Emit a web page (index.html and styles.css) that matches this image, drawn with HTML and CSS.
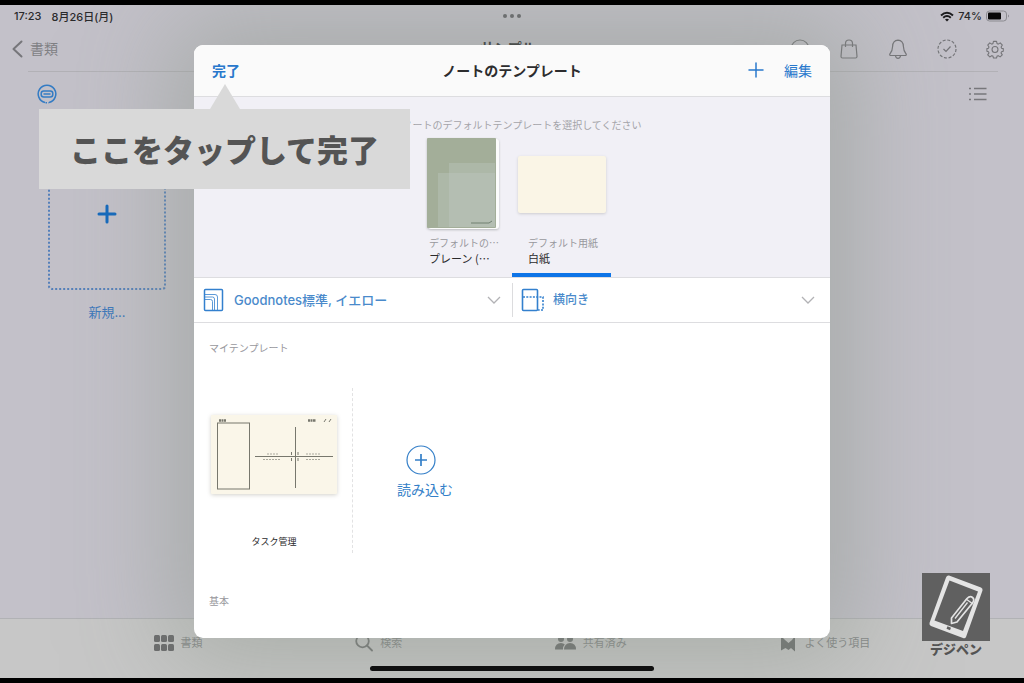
FILE: index.html
```html
<!DOCTYPE html>
<html lang="ja">
<head>
<meta charset="utf-8">
<meta name="viewport" content="width=device-width, initial-scale=1">
<title>ノートのテンプレート</title>
<link rel="stylesheet" href="styles.css">
</head>
<body>
<div class="screen">
  <div class="status">
    <div class="status-left"><span>17:23</span><span>8月26日(月)</span></div>
    <div class="dots"><i></i><i></i><i></i></div>
    <div class="status-right">
      <svg width="14" height="11" viewBox="0 0 14 11" fill="none" stroke="#1c1c1e" stroke-width="2"><path d="M1 4.4Q7-1 13 4.4M3.2 6.7Q7 3.4 10.800 6.700"/><path d="M7 10.500L5 8.400Q7 6.900 9 8.400Z" fill="#1c1c1e" stroke="none"/></svg>
      <span>74%</span>
      <svg width="24" height="12" viewBox="0 0 24 12"><rect x=".5" y="1" width="20" height="10" rx="3" fill="none" stroke="#8b8b90"/><rect x="2" y="2.500" width="13" height="7" rx="1" fill="#080808"/><path d="M22 4.500Q24 6 22 7.500Z" fill="#8b8b90"/></svg>
    </div>
  </div>

  <header class="nav">
    <button class="back" type="button">
      <svg width="11" height="18" viewBox="0 0 11 18" fill="none" stroke="#76767a" stroke-width="2" stroke-linecap="round" stroke-linejoin="round"><path d="M9.500 1.500L1.500 9L9.500 16.500"/></svg>
      <span>書類</span>
    </button>
    <h1>サンプル</h1>
    <div class="nav-icons">
      <button type="button" aria-label="検索"><svg width="20" height="20" viewBox="0 0 20 20"><circle cx="10" cy="10" r="9"/></svg></button>
      <button type="button" aria-label="ストア"><svg width="20" height="20" viewBox="0 0 20 20"><path d="M3 6H17L18 17.500Q18 19 16.500 19H3.500Q2 19 2 17.500ZM6.500 8V4.500Q6.500 1 10 1Q13.500 1 13.500 4.500V8"/></svg></button>
      <button type="button" aria-label="通知"><svg width="20" height="20" viewBox="0 0 20 20"><path d="M10 1.200Q4.800 1.600 4.600 7.500C4.500 12 3.500 13 1.800 15Q1.300 16.300 3 16.500H17Q18.700 16.300 18.200 15C16.500 13 15.500 12 15.400 7.500Q15.200 1.600 10 1.200ZM7.500 16.700Q7.800 19.300 10 19.300Q12.200 19.300 12.500 16.700"/></svg></button>
      <button type="button" aria-label="タスク"><svg width="20" height="20" viewBox="0 0 20 20"><circle cx="10" cy="10" r="9" stroke-dasharray="3 1.710"/><path d="M6.500 10L9 12.500L13.500 7.500"/></svg></button>
      <button type="button" aria-label="設定"><svg width="18" height="20" viewBox="0 0 20 20"><path d="M8.300 1.500h3.400l.6 2.500 1.300.6 2.200-1.400 2.400 2.400-1.400 2.200.5 1.300 1.900.5v2.800l-1.900.6-.6 1.300 1.400 2.200-2.400 2.300-2.100-1.400-1.300.5-.6 2.100H8.300l-.6-2.100-1.300-.5-2.200 1.400-2.300-2.300 1.400-2.200-.6-1.300-1.700-.6V9.600l1.700-.5.6-1.300L1.900 5.600l2.300-2.400 2.200 1.400L7.700 4Z" stroke-linejoin="round"/><circle cx="10" cy="10.500" r="3.300"/></svg></button>
    </div>
  </header>

  <main class="library">
    <div class="tools">
      <svg width="20" height="20" viewBox="0 0 20 20" fill="none" stroke="#347cc4" stroke-width="1.500"><path d="M8 18.500A8.800 8.800 0 1 1 12 18.500"/><path d="M8.500 18.700H11.500" stroke-dasharray="1.500 1"/><rect x="4.200" y="7" width="11.600" height="6" rx="2.500"/><path d="M6.500 10H13.500"/></svg>
      <button type="button" aria-label="リスト表示"><svg width="18" height="14" viewBox="0 0 18 14" fill="none" stroke="#77777b" stroke-width="1.300"><path d="M0 1.500H2M5 1.500H17.500M0 7H2M5 7H17.500M0 12.500H2M5 12.500H17.500"/></svg></button>
    </div>
    <button class="new" type="button">
      <span class="new-box"><svg width="20" height="20" viewBox="0 0 20 20" stroke="#1268bd" stroke-width="3" stroke-linecap="round"><path d="M10 2V18M2 10H18"/></svg></span>
      <span class="new-label">新規...</span>
    </button>
  </main>

  <nav class="tabs">
    <button type="button"><svg width="20" height="18" viewBox="0 0 20 18" fill="#68686a"><rect y="1" width="6" height="7" rx="1.500"/><rect x="7" y="1" width="6" height="7" rx="1.500"/><rect x="14" y="1" width="6" height="7" rx="1.500"/><rect y="10" width="6" height="7" rx="1.500"/><rect x="7" y="10" width="6" height="7" rx="1.500"/><rect x="14" y="10" width="6" height="7" rx="1.500"/></svg><span>書類</span></button>
    <button type="button"><svg width="18" height="18" viewBox="0 0 18 18" fill="none" stroke="#737575" stroke-width="1.800" stroke-linecap="round"><circle cx="7.500" cy="7" r="6.300"/><path d="M12 11.500L17 16.500"/></svg><span>検索</span></button>
    <button type="button"><svg width="21" height="18" viewBox="0 0 21 18" fill="#6d6f6f"><circle cx="6" cy="5" r="3"/><circle cx="15" cy="5" r="3"/><path d="M0 15.500Q0 9 6 9Q8.500 9 9.800 10.500Q8 12 8 15.500ZM9 15.500Q9.500 9 15 9Q21 9 21 15.500Z"/></svg><span>共有済み</span></button>
    <button type="button"><svg width="18" height="18" viewBox="0 0 18 18" fill="#6d6f6f"><path d="M2 2L6 6L9.500 9L13 6L16 2V17.500L12 14L9.500 16L6.500 14L2 16.500Z"/></svg><span>よく使う項目</span></button>
  </nav>
  <div class="home"></div>

  <section class="modal" role="dialog" aria-labelledby="modal-title">
    <div class="modal-head">
      <button class="done" type="button">完了</button>
      <h2 id="modal-title">ノートのテンプレート</h2>
      <div class="modal-actions">
        <button type="button" aria-label="追加"><svg width="16" height="16" viewBox="0 0 16 16" stroke="#2878cc" stroke-width="1.500" stroke-linecap="round"><path d="M8 1V15M1 8H15"/></svg></button>
        <button type="button">編集</button>
      </div>
    </div>
    <div class="defaults">
      <p class="hint">新規ノートのデフォルトテンプレートを選択してください</p>
      <div class="picks">
        <button class="pick" type="button">
          <span class="preview"><svg class="cover" width="72" height="92" viewBox="0 0 72 92"><rect x="1" y="1" width="71" height="90" rx="3" fill="#fcfcfc"/><rect width="69" height="90" rx="1" fill="#a3ae99"/><path d="M22 25H68V89H11V35H22Z" fill="#adb8a8"/><path d="M22 35H68V89H22Z" fill="#b4beb2"/><path d="M44 85H62L65 83" fill="none" stroke="#718071"/></svg></span>
          <small>デフォルトの…</small><span>プレーン (…</span>
        </button>
        <button class="pick active" type="button">
          <span class="preview"><span class="paper"></span></span>
          <small>デフォルト用紙</small><span>白紙</span>
        </button>
      </div>
    </div>
    <div class="filters">
      <label class="filter">
        <svg width="24" height="24" viewBox="0 0 24 24" fill="none" stroke="#3380ce" stroke-width="1.500"><rect x="2.500" y="1.500" width="18" height="21" rx="1"/><path d="M3 6.500H13Q15.500 6.500 15.500 9V22M3 11.500H8.500Q10.500 11.500 10.500 13.500V22M12.500 22V11Q12.500 9 10.500 9H3" stroke-width=".8"/></svg>
        <select aria-label="テンプレートの種類"><option>Goodnotes標準, イエロー</option></select>
        <svg width="14" height="8" viewBox="0 0 14 8" fill="none" stroke="#b2b2b5" stroke-width="1.300"><path d="M1 1L7 7L13 1"/></svg>
      </label>
      <label class="filter second">
        <svg width="24" height="24" viewBox="0 0 24 24" fill="none" stroke="#3380ce" stroke-width="1.600"><rect x="1.500" y="1.500" width="15" height="21" rx="1"/><path d="M2 9H22V22H17" stroke-dasharray="2 1.300"/></svg>
        <select aria-label="用紙の向き"><option>横向き</option></select>
        <svg width="14" height="8" viewBox="0 0 14 8" fill="none" stroke="#b2b2b5" stroke-width="1.300"><path d="M1 1L7 7L13 1"/></svg>
      </label>
    </div>
    <div class="templates">
      <h3>マイテンプレート</h3>
      <div class="shelf">
        <button class="template" type="button">
          <svg class="sheet" width="126" height="79" viewBox="0 0 126 79" fill="none" stroke="#77776d"><rect width="126" height="79" rx="1" fill="#faf6e9" stroke="none"/><rect x="6.500" y="8" width="32" height="66"/><path d="M44 41.500H122M84.500 12V73"/><path d="M8 5.500H15M97 5.500H105" stroke-width="2.500" stroke-dasharray="2 .5"/><path d="M113 7L115 4M118 7L120 4M80.500 37V40M80.500 43V46M87 37V40M87 43V46"/><path d="M56 39H67M52 44.500H69M95 39H109M95 44.500H109" stroke="#aaa99e" stroke-dasharray="2 1"/></svg>
          <span>タスク管理</span>
        </button>
        <button class="import" type="button">
          <svg width="30" height="30" viewBox="0 0 30 30" fill="none" stroke="#347fc8" stroke-width="1.200"><circle cx="15" cy="15" r="14"/><path d="M15 9V21M9 15H21" stroke-width="1.700"/></svg>
          <span>読み込む</span>
        </button>
      </div>
      <h3>基本</h3>
    </div>
  </section>

  <div class="callout">ここをタップして完了</div>
  <div class="brand">
    <svg width="68" height="68" viewBox="0 0 68 68"><rect width="68" height="68" fill="#606060"/><path d="M27 2.500L59 14.500Q61 15.500 60.500 17.500L44 64Q43 66 41 65L9 53Q7 52 7.500 50L24 4.500Q25 2 27 2.500Z" fill="#e4e4e4"/><path d="M27.500 7.500L56 18.500L41 58L12.500 47.500Z" fill="#606060"/><path d="M25 54.500L28.500 56" stroke="#606060" stroke-width="2.500"/><path d="M29.500 45L45 25.500Q48 22.500 50.500 24.500Q53 26.500 50.500 30L35 49L29.500 50.500Z" fill="#606060" stroke="#e4e4e4" stroke-width="1.700" stroke-linejoin="round"/><path d="M33 45.500L45.500 29.500" stroke="#e4e4e4" stroke-width="1.300"/><path d="M44 26L51 31" stroke="#e4e4e4" stroke-width="1.500"/></svg>
    <span>デジペン</span>
  </div>
</div>
</body>
</html>
```
FILE: styles.css
```css
* { box-sizing: border-box; }

body {
  margin: 0;
  padding: 5px 0;
  background: #000;
  font-family: Inter, "Noto Sans CJK JP", sans-serif;
  color: #2a2a2c;
}

h1, h2, h3, p { margin: 0; }

button {
  padding: 0;
  border: 0;
  background: none;
  color: inherit;
  font: inherit;
}

svg { display: block; flex: none; }

.screen {
  position: relative;
  display: flex;
  flex-direction: column;
  min-height: calc(100vh - 10px);
  overflow: hidden;
  background: #c3c1c9;
}

.status, .nav {
  display: grid;
  grid-template-columns: 1fr auto 1fr;
  align-items: center;
}

.status {
  height: 22px;
  padding: 0 14px;
  font-size: 11px;
  font-weight: 500;
}

.status-left, .status-right { display: flex; align-items: center; }
.status-left { gap: 10px; }
.status-right { justify-content: flex-end; gap: 4px; }

.dots { display: flex; gap: 3px; }
.dots i { width: 4px; height: 4px; border-radius: 50%; background: #646468; }

.nav {
  height: 44px;
  padding: 0 20px 0 12px;
}

.nav h1 { padding-bottom: 4px; font-size: 14px; font-weight: 700; }

.back {
  display: flex;
  align-items: center;
  justify-self: start;
  gap: 7px;
  font-size: 14px;
  line-height: 20px;
  color: #808084;
}

.nav-icons { display: flex; justify-content: flex-end; gap: 29px; }
.nav-icons svg { fill: none; stroke: #747478; stroke-width: 1.2; }

.library {
  flex: 1;
  margin: 0 26px 0 28px;
  border-top: 1px solid #b2b1b6;
}

.tools {
  display: flex;
  align-items: center;
  justify-content: space-between;
  height: 44px;
  padding: 0 11px 0 9px;
}

.new {
  display: grid;
  gap: 12px;
  width: 118px;
  margin: 22px 0 0 20px;
  text-align: center;
}

.new-box {
  display: grid;
  place-items: center;
  height: 152px;
  border: 2px dotted #5580ba;
  border-radius: 4px;
}

.new-label { font-size: 13px; line-height: 20px; color: #3d78bb; }

.tabs {
  display: flex;
  align-items: flex-start;
  justify-content: space-between;
  height: 60px;
  padding: 15px 15% 0;
  border-top: 1px solid #b1b2b5;
  background: #c7c7c7;
}

.tabs button {
  display: flex;
  align-items: center;
  gap: 7px;
  font-size: 11px;
  line-height: 18px;
  color: #858787;
}

.home {
  position: absolute;
  z-index: 2;
  bottom: 7px;
  left: 50%;
  width: 284px;
  height: 5px;
  margin-left: -142px;
  border-radius: 3px;
  background: #101010;
}

.modal {
  position: absolute;
  top: 40px;
  left: 0;
  right: 0;
  max-width: 636px;
  margin: 0 auto;
  overflow: hidden;
  border-radius: 9px;
  background: #fff;
  box-shadow: 0 0 100px 24px rgba(140, 150, 138, 0.5);
}

.modal-head {
  display: grid;
  grid-template-columns: 1fr auto 1fr;
  align-items: center;
  height: 52px;
  padding: 0 18px 2px;
  border-bottom: 1px solid #dddde0;
  background: #fafafa;
  font-size: 14px;
  color: #2878cc;
}

.modal-head h2 { font-size: 14px; font-weight: 700; color: #2c2c2e; }
.done { justify-self: start; font-weight: 700; }
.modal-actions { display: flex; align-items: center; justify-content: flex-end; gap: 20px; }

.defaults {
  padding-top: 20px;
  border-bottom: 1px solid #dddde0;
  background: #f1f0f6;
}

.hint {
  font-size: 10px;
  line-height: 16px;
  text-align: center;
  color: #a4a4a9;
}

.picks { display: flex; justify-content: center; margin-top: 2px; }

.pick {
  display: flex;
  flex-direction: column;
  width: 99px;
  padding: 0 0 6px 16px;
  border-bottom: 4px solid transparent;
  font-family: "Noto Sans CJK JP", sans-serif;
  font-size: 11px;
  line-height: 17px;
  text-align: left;
  white-space: nowrap;
}

.pick.active { border-color: #0d74e7; }
.pick small { font-size: 10px; line-height: 15px; color: #98989d; }

.preview {
  display: grid;
  place-items: center;
  height: 98px;
  margin: 0 8px 2px -10px;
}

.pick:first-child .preview { margin-right: 6px; }

.cover { filter: drop-shadow(0 1px 1px #b9b9bc); }

.paper {
  width: 88px;
  height: 57px;
  border-radius: 2px;
  background: #faf5e6;
  box-shadow: 0 1px 3px #cccbd0;
}

.filters {
  display: grid;
  grid-template-columns: 1fr 1fr;
  padding: 5px 0;
  border-bottom: 1px solid #dddde0;
}

.filter {
  display: flex;
  align-items: center;
  gap: 8px;
  height: 34px;
  padding: 0 11px 0 8px;
}

.filter.second { padding-right: 15px; border-left: 1px solid #dcdcde; }

.filter select {
  flex: 1;
  min-width: 0;
  padding: 0;
  border: 0;
  appearance: none;
  background: none;
  font: 500 13px/20px Inter, "Noto Sans CJK JP", sans-serif;
  color: #4a8acb;
}

.filter.second select { font-size: 12px; }

.templates { padding: 17px 15px 29px; }

.templates h3 {
  font-size: 10px;
  font-weight: 400;
  line-height: 16px;
  color: #98989d;
}

.shelf { display: flex; margin: 32px 0 40px; }

.template {
  display: flex;
  flex-direction: column;
  justify-content: space-between;
  align-items: center;
  height: 165px;
  padding: 27px 15px 4px 2px;
  border-right: 1px dashed #e2e2e3;
  font-size: 9px;
  line-height: 14px;
}

.sheet { filter: drop-shadow(0 1px 2px #d2d1cb); }

.import {
  display: flex;
  flex-direction: column;
  justify-content: center;
  gap: 4px;
  padding: 4px 0 0 44px;
  font-size: 14px;
  line-height: 22px;
  color: #347fc8;
}

.import svg { margin-left: 9px; }

.callout {
  position: absolute;
  top: 104px;
  left: 39px;
  padding: 22px 31px 18px;
  background: #d9d9d9;
  font-size: 31px;
  font-weight: 900;
  line-height: 40px;
  color: #545454;
}

.callout::before {
  content: "";
  position: absolute;
  bottom: 100%;
  left: 171px;
  border: solid transparent;
  border-width: 0 15px 25px;
  border-bottom-color: #d9d9d9;
}

.brand {
  position: absolute;
  right: 34px;
  bottom: 20px;
  display: grid;
  justify-items: center;
  font-size: 13px;
  font-weight: 900;
  line-height: 17px;
  color: #545454;
}
```
